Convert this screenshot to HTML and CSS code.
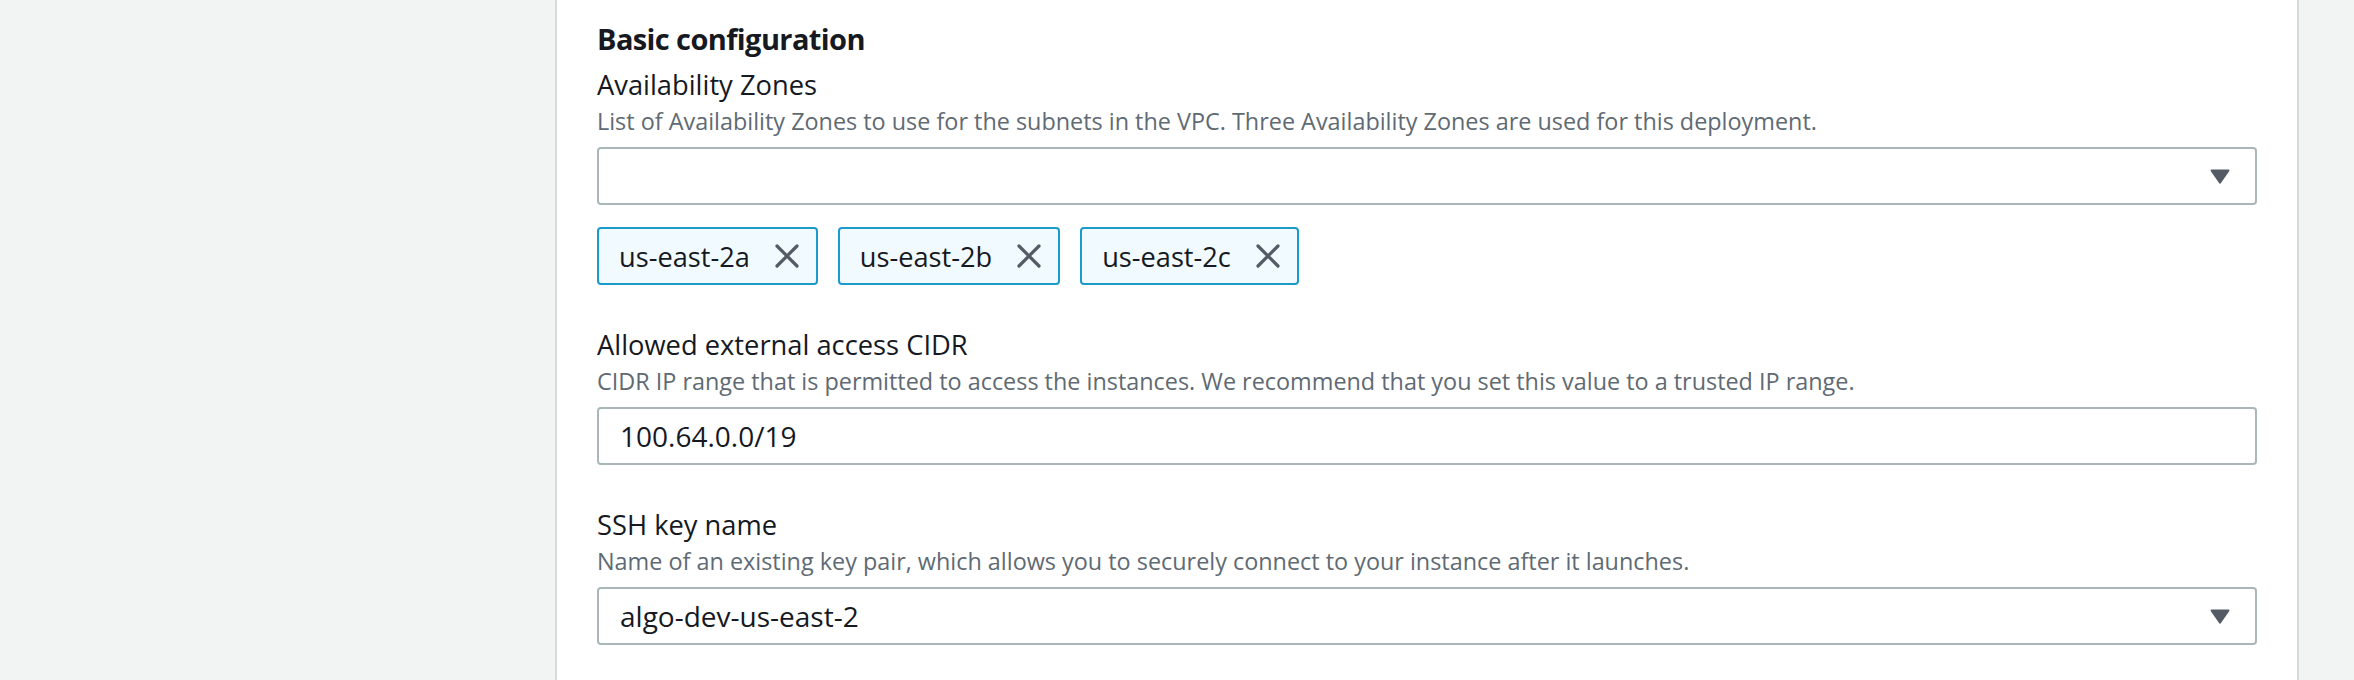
FILE: index.html
```html
<!DOCTYPE html>
<html lang="en">
<head>
<meta charset="utf-8">
<title>Basic configuration</title>
<link rel="stylesheet" href="styles.css">
</head>
<body>
<div class="page">
  <section class="panel">
    <h2 class="title">Basic configuration</h2>

    <div class="field field-first">
      <div class="label">Availability Zones</div>
      <div class="desc">List of Availability Zones to use for the subnets in the VPC. Three Availability Zones are used for this deployment.</div>
      <div class="control select">
        <span class="value"></span>
        <svg class="caret" width="20" height="15" viewBox="0 0 20 15" aria-hidden="true"><path d="M1.5 1.5 H18.5 L10 13.6 Z"/></svg>
      </div>
      <div class="tokens">
        <span class="token"><span class="token-text">us-east-2a</span><svg class="dismiss" width="26" height="26" viewBox="0 0 26 26" aria-hidden="true"><path d="M3 3 L23 23 M23 3 L3 23"/></svg></span>
        <span class="token"><span class="token-text">us-east-2b</span><svg class="dismiss" width="26" height="26" viewBox="0 0 26 26" aria-hidden="true"><path d="M3 3 L23 23 M23 3 L3 23"/></svg></span>
        <span class="token"><span class="token-text">us-east-2c</span><svg class="dismiss" width="26" height="26" viewBox="0 0 26 26" aria-hidden="true"><path d="M3 3 L23 23 M23 3 L3 23"/></svg></span>
      </div>
    </div>

    <div class="field">
      <div class="label">Allowed external access CIDR</div>
      <div class="desc">CIDR IP range that is permitted to access the instances. We recommend that you set this value to a trusted IP range.</div>
      <div class="control input"><span class="value">100.64.0.0/19</span></div>
    </div>

    <div class="field">
      <div class="label">SSH key name</div>
      <div class="desc">Name of an existing key pair, which allows you to securely connect to your instance after it launches.</div>
      <div class="control select">
        <span class="value">algo-dev-us-east-2</span>
        <svg class="caret" width="20" height="15" viewBox="0 0 20 15" aria-hidden="true"><path d="M1.5 1.5 H18.5 L10 13.6 Z"/></svg>
      </div>
    </div>
  </section>
</div>
</body>
</html>
```
FILE: styles.css
```css
html, body {
  margin: 0;
  padding: 0;
}

body {
  background: #f2f3f3;
  font-family: "Open Sans", "Noto Sans", sans-serif;
  color: #16191f;
  overflow: hidden;
}

.page {
  display: flex;
  min-height: 680px;
}

.panel {
  box-sizing: border-box;
  margin-left: 555px;
  width: 1744px;
  min-height: 680px;
  background: #ffffff;
  border-left: 2px solid #d5dbdb;
  border-right: 2px solid #d5dbdb;
  padding: 20.5px 40px 0 40px;
}

.title {
  margin: 0;
  font-size: 29px;
  font-weight: 700;
  letter-spacing: -0.6px;
  line-height: 36px;
  color: #16191f;
}

.field {
  margin-top: 43px;
}

.field-first {
  margin-top: 11.5px;
}

.label {
  font-size: 27.3px;
  line-height: 34px;
  color: #16191f;
}

.desc {
  margin-top: 4px;
  font-size: 23.4px;
  line-height: 30px;
  color: #606a73;
}

.control {
  box-sizing: border-box;
  margin-top: 11px;
  height: 58px;
  display: flex;
  align-items: center;
  justify-content: space-between;
  border: 2px solid #aab7b8;
  border-radius: 4px;
  background: #ffffff;
  padding: 0 25px 0 21px;
  font-size: 28px;
  color: #16191f;
}

.value {
  white-space: nowrap;
}

.caret {
  flex: none;
  display: block;
}

.caret path {
  fill: #545b64;
  stroke: #545b64;
  stroke-width: 2;
  stroke-linejoin: round;
}

.tokens {
  display: flex;
  gap: 20px;
  margin-top: 22px;
}

.token {
  box-sizing: border-box;
  height: 58px;
  display: flex;
  align-items: center;
  padding: 0 16px 0 20px;
  border: 2px solid #1a9bc9;
  border-radius: 4px;
  background: #f1faff;
  font-size: 27.2px;
  color: #16191f;
}

.token-text {
  white-space: nowrap;
}

.dismiss {
  flex: none;
  display: block;
  margin-left: 24px;
}

.dismiss path {
  fill: none;
  stroke: #545b64;
  stroke-width: 3.2;
  stroke-linecap: round;
}
```
